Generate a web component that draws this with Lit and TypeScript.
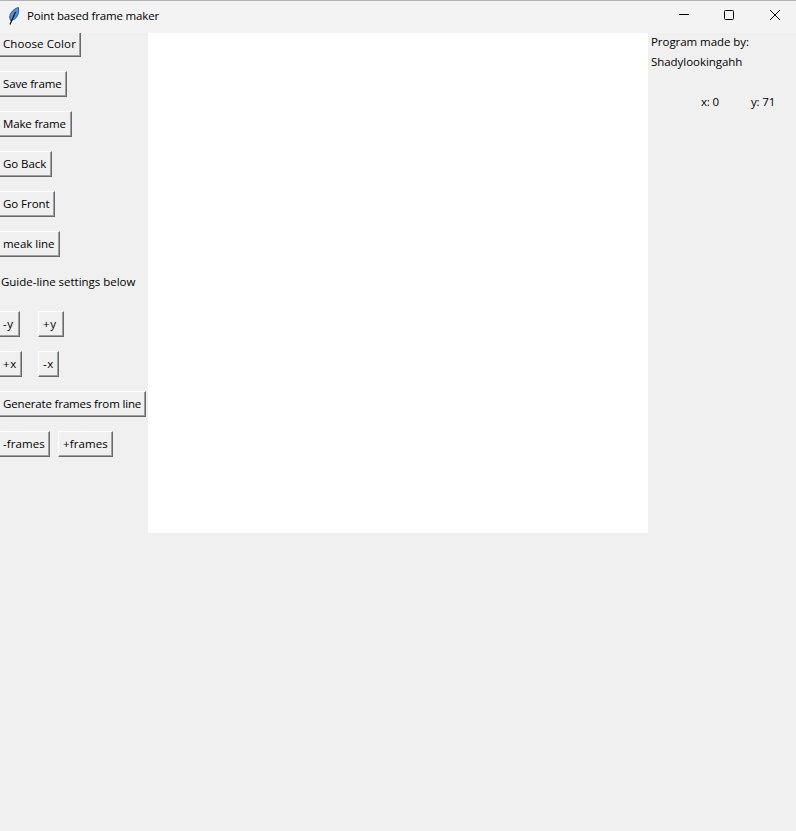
import { LitElement, html, css } from "lit";
import { customElement } from "lit/decorators.js";

@customElement("tk-button")
class TkButton extends LitElement {
  static properties = { label: {}, width: { type: Number } };
  label = "";
  width = 0;
  static styles = css`
    :host { display: block; }
    .btn {
      box-sizing: border-box; height: 26px; padding: 0 0 2px 4px;
      display: flex; align-items: center; white-space: nowrap;
      background: #f0f0f0; color: #000;
      border-top: 1px solid #fff; border-left: 1px solid #fff;
      border-right: 1px solid #696969; border-bottom: 1px solid #696969;
      box-shadow: inset -1px -1px 0 #a0a0a0;
      font: 11.5px "Open Sans", sans-serif; letter-spacing: var(--ls, -0.15px);
    }
  `;
  render() {
    return html`<div class="btn" style="width:${this.width}px">${this.label}</div>`;
  }
}

@customElement("app-root")
class AppRoot extends LitElement {
  static styles = css`
    :host { display: block; width: 796px; height: 831px; background: #f0f0f0; overflow: hidden;
      font: 11.5px "Open Sans", sans-serif; letter-spacing: -0.15px; color: #000; }
    .title { position: relative; z-index: 1; box-sizing: border-box; height: 33px; background: #f3f3f3;
      border-top: 1px solid #b4b4b4; display: flex; align-items: flex-start; }
    .feather { margin: 5px 0 0 5px; width: 16px; height: 20px; flex: none; }
    .name { margin: 7px 0 0 6px; white-space: nowrap; }
    .winbtns { margin: 0 -2px 0 auto; display: flex; }
    .winbtn { width: 46px; height: 28px; display: flex; align-items: center; justify-content: center; }
    .winbtn svg { width: 12px; height: 12px; }
    .main { display: flex; align-items: flex-start; }
    .side { width: 148px; flex: none; margin-top: -2px; margin-left: -2px; margin-right: 2px;
      display: flex; flex-direction: column; gap: 14px; }
    .row { display: flex; }
    .guide { height: 26px; margin-left: 3px; white-space: nowrap; line-height: 22px; letter-spacing: -0.02px; }
    .canvas { width: 500px; height: 500px; background: #fff; flex: none; }
    .info { margin: -1px 0 0 3px; flex: 1; letter-spacing: -0.05px; }
    .line { height: 20px; line-height: 20px; white-space: nowrap; }
    .coords { display: flex; margin: 22px 0 0 50px; letter-spacing: -0.15px; }
    .coords span:first-child { width: 50px; }
    .gap-y { gap: 18px; }
    .gap-x { gap: 16px; }
    .gap-f { gap: 8px; }
    .mid { --ls: -0.05px; }
    .loose { --ls: 0.1px; }
    .loosest { --ls: 0.6px; }
  `;
  render() {
    return html`
      <div class="title">
        <svg class="feather" viewBox="0 0 16 20">
          <path d="M13.5 1.5 C9 2.5 5 6.5 4.6 11 L5.5 14.5 C11 14 14.5 9 13.5 1.5 Z" fill="#4a90e2" stroke="#24466f" stroke-width=".8"/>
          <path d="M10.5 6 L5 18.5" stroke="#111" stroke-width="1.2" fill="none"/>
        </svg>
        <span class="name">Point based frame maker</span>
        <div class="winbtns">
          <div class="winbtn"><svg viewBox="0 0 12 12"><path d="M2 5.5H12" stroke="#000" fill="none"/></svg></div>
          <div class="winbtn"><svg viewBox="0 0 12 12"><rect x="1.5" y="1.5" width="9" height="9" rx="1" stroke="#000" fill="none"/></svg></div>
          <div class="winbtn"><svg viewBox="0 0 12 12"><path d="M1 1L11 11M11 1L1 11" stroke="#000" fill="none"/></svg></div>
        </div>
      </div>
      <div class="main">
        <div class="side">
          <tk-button class="loose" label="Choose Color" .width=${83}></tk-button>
          <tk-button label="Save frame" .width=${69}></tk-button>
          <tk-button label="Make frame" .width=${74}></tk-button>
          <tk-button class="mid" label="Go Back" .width=${54}></tk-button>
          <tk-button class="mid" label="Go Front" .width=${57}></tk-button>
          <tk-button class="mid" label="meak line" .width=${62}></tk-button>
          <div class="guide">Guide-line settings below</div>
          <div class="row gap-y"><tk-button class="loosest" label="-y" .width=${22}></tk-button><tk-button class="loosest" label="+y" .width=${26}></tk-button></div>
          <div class="row gap-x"><tk-button class="loosest" label="+x" .width=${24}></tk-button><tk-button class="loosest" label="-x" .width=${21}></tk-button></div>
          <tk-button label="Generate frames from line" .width=${148}></tk-button>
          <div class="row gap-f"><tk-button class="loose" label="-frames" .width=${52}></tk-button><tk-button class="loose" label="+frames" .width=${55}></tk-button></div>
        </div>
        <div class="canvas"></div>
        <div class="info">
          <div class="line">Program made by:</div>
          <div class="line">Shadylookingahh</div>
          <div class="coords"><span>x: 0</span><span>y: 71</span></div>
        </div>
      </div>
    `;
  }
}
